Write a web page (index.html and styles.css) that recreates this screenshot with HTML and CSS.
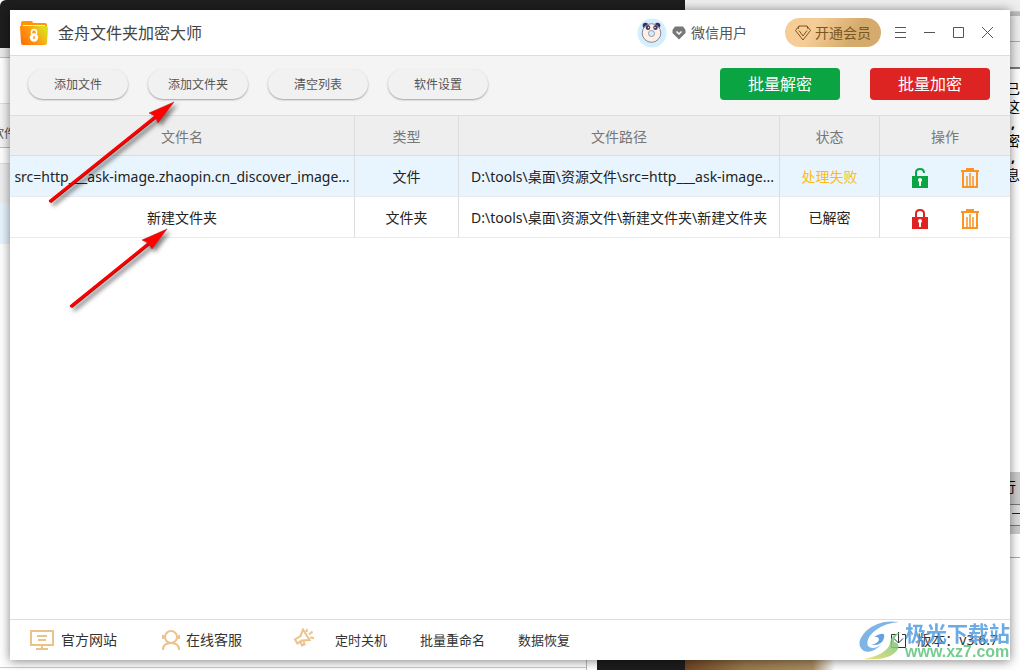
FILE: index.html
```html
<!DOCTYPE html>
<html lang="zh-CN">
<head>
<meta charset="utf-8">
<title>金舟文件夹加密大师</title>
<link rel="stylesheet" href="styles.css">
</head>
<body>
<div class="backdrop" aria-hidden="true">
  <div class="bg bg-dark"></div>
  <div class="bg bg-right-top"></div>
  <div class="bg bg-right-bar"></div>
  <div class="bg bg-right-page"><span>已<br>这</span><span><b>,</b><br>密</span><span><b>,</b><br>息</span></div>
  <div class="bg bg-right-buttons"><span>行</span><i></i></div>
  <div class="bg bg-left-title"></div>
  <div class="bg bg-left-tools">软件</div>
  <div class="bg bg-left-head"></div>
  <div class="bg bg-left-row"></div>
  <div class="bg bg-bottom-line"></div>
  <div class="bg bg-bottom-dark"></div>
  <div class="bg bg-bottom-photo"></div>
</div>

<main class="window">
  <header class="titlebar">
    <svg class="logo" viewBox="0 0 28 26" width="28" height="26">
      <defs>
        <linearGradient id="folder" x1="0" y1="0.7" x2="1" y2="0.2">
          <stop offset="0" stop-color="#ff7408"/><stop offset="0.5" stop-color="#ff9d12"/><stop offset="0.75" stop-color="#e8c81a"/><stop offset="1" stop-color="#d8e41c"/>
        </linearGradient>
      </defs>
      <path d="M1 3Q1 1 3 1H11Q13 1 13 3H25Q27 3 27 5V11H1Z" fill="#ff9500"/>
      <path d="M3 5H25V10H3Z" fill="#fff3c4"/>
      <path d="M0 7Q0 5 2 6H26Q28 6 28 8L27 23Q27 25 25 25H3Q1 25 1 23Z" fill="url(#folder)"/>
      <path d="M11.500 14V12a2.500 2.500 0 0 1 5 0v2" fill="none" stroke="#fff" stroke-width="1.500"/>
      <circle cx="14" cy="17.500" r="4.200" fill="#fff"/>
      <path d="M13.400 16h1.200l.2 3h-1.600z" fill="#ff9a1a"/>
    </svg>
    <h1 class="title">金舟文件夹加密大师</h1>
    <div class="account">
      <svg class="avatar" viewBox="0 0 30 30" width="30" height="30">
        <circle cx="15" cy="15" r="14.500" fill="#d3effc"/>
        <circle cx="8.500" cy="7.500" r="2.800" fill="#3a2c63"/><circle cx="20.500" cy="7.500" r="2.800" fill="#3a2c63"/>
        <circle cx="14.500" cy="15" r="9.300" fill="#fbf1e4" stroke="#8c83a0"/>
        <ellipse cx="11" cy="9.500" rx="2.200" ry="2.500" fill="#46376b"/><ellipse cx="18.500" cy="9.500" rx="2.200" ry="2.500" fill="#46376b"/>
        <circle cx="11.500" cy="9.500" r="0.700" fill="#fff"/><circle cx="18" cy="9.500" r="0.700" fill="#fff"/>
        <circle cx="14.500" cy="15.500" r="3" fill="#d3effc" stroke="#9b93b0"/>
      </svg>
      <svg viewBox="0 0 14 14" width="14" height="14"><path d="M3 .5H11L13.500 4V7L7 13.500L.5 7V4Z" fill="#777"/><path d="M4.500 5.500L7 8L9.500 5.500" fill="none" stroke="#fff" stroke-width="1.500"/></svg>
      <span>微信用户</span>
    </div>
    <button class="vip" type="button">
      <svg viewBox="0 0 16 16" width="16" height="16" fill="none" stroke="#7b5520"><path d="M4 1H12L15.500 5.500L8 15L.5 5.500ZM4 5.500L8 11L12 5.500M4 1L3 4M12 1L13 4"/></svg>
      开通会员
    </button>
    <nav class="controls">
      <button type="button" aria-label="菜单"><svg viewBox="0 0 13 13" width="13" height="13"><path d="M1 1.500H12M1 6.500H12M1 11.500H12"/></svg></button>
      <button type="button" aria-label="最小化"><svg viewBox="0 0 13 13" width="13" height="13"><path d="M1 6.500H12"/></svg></button>
      <button type="button" aria-label="最大化"><svg viewBox="0 0 13 13" width="13" height="13"><path d="M1.500 1.500H11.500V11.500H1.500Z"/></svg></button>
      <button type="button" aria-label="关闭"><svg viewBox="0 0 13 13" width="13" height="13"><path d="M1 1L12 12M12 1L1 12"/></svg></button>
    </nav>
  </header>

  <section class="toolbar">
    <button class="pill" type="button">添加文件</button>
    <button class="pill" type="button">添加文件夹</button>
    <button class="pill" type="button">清空列表</button>
    <button class="pill" type="button">软件设置</button>
    <button class="batch decrypt" type="button">批量解密</button>
    <button class="batch encrypt" type="button">批量加密</button>
  </section>

  <section class="content">
    <table class="files">
      <colgroup><col class="c-name"><col class="c-type"><col class="c-path"><col class="c-state"><col class="c-ops"></colgroup>
      <thead><tr><th>文件名</th><th>类型</th><th>文件路径</th><th>状态</th><th>操作</th></tr></thead>
      <tbody>
        <tr class="selected">
          <td class="name">src=http___ask-image.zhaopin.cn_discover_image...</td><td>文件</td>
          <td class="path">D:\tools\桌面\资源文件\src=http___ask-image...</td>
          <td class="failed">处理失败</td>
          <td><div class="ops">
            <button type="button" aria-label="解密"><svg viewBox="0 0 16 20" width="16" height="20"><path d="M4 8V4.500Q4 1 8 1Q12 1 12 5" fill="none" stroke="#0ba443" stroke-width="2"/><path fill="#0ba443" d="M0 8H16V20H0Z"/><path fill="#fff" d="M6 12a2 2 0 0 1 4 0q0 1-1 2v4H7v-4q-1-1-1-2Z"/></svg></button>
            <button type="button" aria-label="删除"><svg class="trash" viewBox="0 0 18 20" width="18" height="20"><path d="M0 3H18M5 1H13M2 3V19H16V3"/><path class="bars" d="M6 8V18M9 5V18M12 8V18"/></svg></button>
          </div></td>
        </tr>
        <tr>
          <td>新建文件夹</td><td>文件夹</td>
          <td class="path">D:\tools\桌面\资源文件\新建文件夹\新建文件夹</td>
          <td>已解密</td>
          <td><div class="ops">
            <button type="button" aria-label="加密"><svg viewBox="0 0 16 20" width="16" height="20"><path d="M4 9V4.500Q4 1 8 1Q12 1 12 4.500V9" fill="none" stroke="#de2423" stroke-width="2"/><path fill="#de2423" d="M0 8H16V20H0Z"/><path fill="#fff" d="M6 12a2 2 0 0 1 4 0q0 1-1 2v4H7v-4q-1-1-1-2Z"/></svg></button>
            <button type="button" aria-label="删除"><svg class="trash" viewBox="0 0 18 20" width="18" height="20"><path d="M0 3H18M5 1H13M2 3V19H16V3"/><path class="bars" d="M6 8V18M9 5V18M12 8V18"/></svg></button>
          </div></td>
        </tr>
      </tbody>
    </table>
  </section>

  <footer class="footer">
    <a class="site" href="#site"><svg viewBox="0 0 24 20" width="24" height="20"><path d="M1 1H23V15H1ZM12 15V19M6 19H18M7 6H17M8 10H16"/></svg>官方网站</a>
    <a class="service" href="#service"><svg viewBox="0 0 20 20" width="20" height="20"><circle cx="10" cy="7" r="6"/><path d="M2 20Q2 13 10 13Q18 13 18 20M2 5V9M18 5V9"/></svg>在线客服</a>
    <svg class="horn" viewBox="0 0 20 20" width="20" height="20"><path d="M9 1.500L15.500 12L7.500 12.500L3.500 15.500L1 11.500L6.500 8ZM6.500 14L8 17.500L10.500 16.500L9.500 13M12.500 4L13 1M15 6.500L18.500 3.500M16 9.500L20 10"/></svg>
    <a class="extra" href="#shutdown">定时关机</a>
    <a class="extra" href="#rename">批量重命名</a>
    <a class="extra" href="#recover">数据恢复</a>
    <div class="version"><svg viewBox="0 0 17 17" width="17" height="17"><path d="M6 2.500H1.500V15.500H15.500V2.500H12M8.500 0V11M4 6.500L8.500 11L13 6.500"/></svg><span>版本：</span><span>v3.6.7</span></div>
    <div class="watermark">
      <svg viewBox="0 0 46 40" width="46" height="40">
        <defs><linearGradient id="leaf" x1="1" y1="0" x2="0" y2="1"><stop stop-color="#57c184"/><stop offset="1" stop-color="#eddc62"/></linearGradient></defs>
        <path d="M40 2Q20-1 7 11Q-5 24 5 31Q13 34 23 24Q14 31 9 26Q6 18 17 10Q26 3 40 2Z" fill="#589edb" opacity="0.900"/>
        <path d="M15 17Q27 10 25 18Q23 26 12 25Q20 23 20 19Q19 16 15 17Z" fill="#4b91d6"/>
        <path d="M42 12Q31 15 31 23Q29 34 5 39Q32 41 39 29Q41 23 35 22Q35 16 42 12Z" fill="url(#leaf)"/>
      </svg>
      <div class="mark-text"><strong>极光下载站</strong><span>www.xz7.com</span></div>
    </div>
  </footer>
</main>

<svg class="arrow arrow-one" viewBox="0 0 132 108" width="132" height="108" aria-hidden="true"><path d="M4 102L110 17" stroke="#a11" stroke-width="3"/><path d="M4 101L110 16" stroke="#f00" stroke-width="2.500" stroke-linecap="round"/><path d="M128 2L103 13L109 16L112 23Z" fill="#f00" stroke="#a22" stroke-width="0.500"/></svg>
<svg class="arrow arrow-two" viewBox="0 0 104 84" width="104" height="84" aria-hidden="true"><path d="M4 80L82 17" stroke="#a11" stroke-width="3"/><path d="M4 79L82 16" stroke="#f00" stroke-width="2.500" stroke-linecap="round"/><path d="M100 2L75 13L81 16L85 22Z" fill="#f00" stroke="#a22" stroke-width="0.500"/></svg>
</body>
</html>
```
FILE: styles.css
```css
* { box-sizing: border-box; }
body { margin: 0; min-height: 100vh; padding: 10px; display: flex; position: relative; overflow: hidden; background: #fff; color: #222; font: 14px/20px "Noto Sans", "Noto Sans CJK SC", sans-serif; }
button { border: 0; padding: 0; background: none; font: inherit; color: inherit; }
a { color: inherit; text-decoration: none; }
svg { flex: none; display: block; }

.backdrop { position: absolute; inset: 0; }
.bg { position: absolute; overflow: hidden; color: #000; }
.bg-dark { left: 0; top: 0; width: 685px; height: 48px; background: #1e1e1e; border-radius: 6px 0 0 0; }
.bg-right-top { left: 685px; right: 0; top: 0; height: 12px; background: #eee; border-bottom: 1px solid #ccc; }
.bg-right-bar { right: 0; top: 12px; width: 12px; height: 58px; background: linear-gradient(#bbb 4px, #eee 4px 29px, #aaa 29px 30px, #eee 30px 55px, #777 55px 57px, #fff 57px); }
.bg-right-page { right: 0; top: 80px; width: 14px; height: 120px; font-size: 14px; line-height: 18px; }
.bg-right-page span { display: block; height: 34px; }
.bg-right-page b { padding-left: 5px; }
.bg-right-buttons { right: 0; top: 472px; width: 12px; height: 86px; font-size: 14px; background: linear-gradient(#ccc 32px, #777 32px 33px, #ddd 33px 53px, #777 53px 54px, #ccc 54px 62px, #fff 62px 85px, #aaa 85px); }
.bg-right-buttons span { display: block; padding-top: 5px; text-indent: -6px; }
.bg-right-buttons i { display: block; margin: 16px 0 0 4px; height: 1px; background: #222; }
.bg-left-title { left: 0; top: 48px; width: 12px; height: 10px; background: #eaeaea; border-bottom: 1px solid #bbb; }
.bg-left-tools { left: 0; top: 103px; width: 12px; height: 45px; padding-top: 20px; font-size: 12px; text-indent: -8px; white-space: nowrap; color: #555; background: #f4f4f4; border-top: 1px solid #ddd; border-bottom: 1px solid #bbb; }
.bg-left-head { left: 0; top: 163px; width: 12px; height: 40px; background: #eee; border-top: 1px solid #ddd; }
.bg-left-row { left: 0; top: 203px; width: 12px; height: 41px; background: #e8f5fe; }
.bg-bottom-line { left: 0; bottom: 0; width: 587px; height: 13px; border-right: 1px solid #bbb; background: linear-gradient(#fff 10px, #ccc 10px 11px, #fff 11px); }
.bg-bottom-dark { left: 597px; bottom: 0; width: 88px; height: 11px; background: #1d1d1d; }
.bg-bottom-photo { left: 685px; bottom: 0; width: 150px; height: 11px; background: linear-gradient(90deg, #704626, #9a7a4c 40%, #a98c60 85%, #fff); }

.window { flex: 1; min-width: 0; position: relative; display: flex; flex-direction: column; background: #fff; box-shadow: 0 1px 10px rgba(0,0,0,.5); }
.titlebar { display: flex; align-items: center; height: 46px; padding: 0 16px 0 10px; border-bottom: 1px solid #ddd; }
.title { margin: 0 0 0 10px; font-size: 16px; line-height: 24px; font-weight: 400; color: #444; }
.account { display: flex; align-items: center; margin-left: auto; color: #555; }
.account svg + svg { margin: 0 5px; }
.vip { display: flex; align-items: center; justify-content: center; gap: 4px; width: 96px; height: 29px; margin-left: 38px; border-radius: 15px; background: linear-gradient(120deg, #f6cd97 30%, #d5ab6d 70%); color: #7b5520; }
.controls { display: flex; gap: 16px; margin-left: 13px; fill: none; stroke: #555; }

.toolbar { display: flex; align-items: center; gap: 20px; height: 60px; padding: 0 20px 4px 18px; background: #f4f4f4; border-bottom: 1px solid #ddd; }
.pill { width: 100px; height: 30px; padding-top: 2px; border-radius: 15px; background: #f1f1f1; box-shadow: 0 1px 2px rgba(0,0,0,.35); font-size: 12px; color: #555; }
.batch { width: 120px; height: 32px; border-radius: 4px; color: #fff; font-size: 16px; }
.decrypt { margin-left: auto; background: #0ba443; }
.encrypt { margin-left: 10px; background: #de2423; }

.content { flex: 1; }
.files { width: 100%; border-collapse: separate; border-spacing: 0; table-layout: fixed; }
.c-type { width: 104px; }
.c-path { width: 321px; }
.c-state { width: 100px; }
.c-ops { width: 130px; }
.files th, .files td { height: 41px; padding: 2px 0 0; border-right: 1px solid #ddd; border-bottom: 1px solid #eaeaea; text-align: center; font-weight: 400; white-space: nowrap; overflow: hidden; }
.files th { height: 40px; background: #eee; color: #777; border-bottom-color: #ddd; }
.files th:last-child, .files td:last-child { border-right: 0; }
.files .path { padding-left: 12px; text-align: left; }
.selected { background: #e8f5fe; }
.files .failed { color: #fdbc14; }
.ops { display: flex; justify-content: center; gap: 33px; padding-top: 2px; }
.trash { fill: none; stroke: #fc9420; stroke-width: 2; }
.bars { stroke-width: 1.5; }

.footer { position: relative; display: flex; align-items: center; height: 41px; padding: 0 12px 0 20px; border-top: 1px solid #ddd; color: #333; }
.footer a { display: flex; align-items: center; gap: 7px; }
.footer a svg, .horn { fill: none; stroke: #ebc28b; stroke-width: 2; }
.footer .service { margin-left: 44px; gap: 5px; }
.horn { margin: 0 21px 4px 52px; }
.footer .extra { margin-right: 33px; font-size: 13px; }
.version { display: flex; align-items: center; margin-left: auto; }
.version svg { margin-right: 10px; fill: none; stroke: #333; }
.watermark { position: absolute; right: 0; bottom: 0; display: flex; opacity: .85; white-space: nowrap; }
.mark-text { display: flex; flex-direction: column; color: #5cc47c; font: 700 16px/16px "Liberation Sans", sans-serif; }
.mark-text strong { color: #539de0; font: 700 21px/24px "Noto Sans CJK SC", sans-serif; }

.arrow { position: absolute; fill: none; filter: drop-shadow(3px 3px 2px rgba(0,0,0,.5)); pointer-events: none; }
.arrow-one { left: 46px; top: 100px; }
.arrow-two { left: 67px; top: 227px; }
```
